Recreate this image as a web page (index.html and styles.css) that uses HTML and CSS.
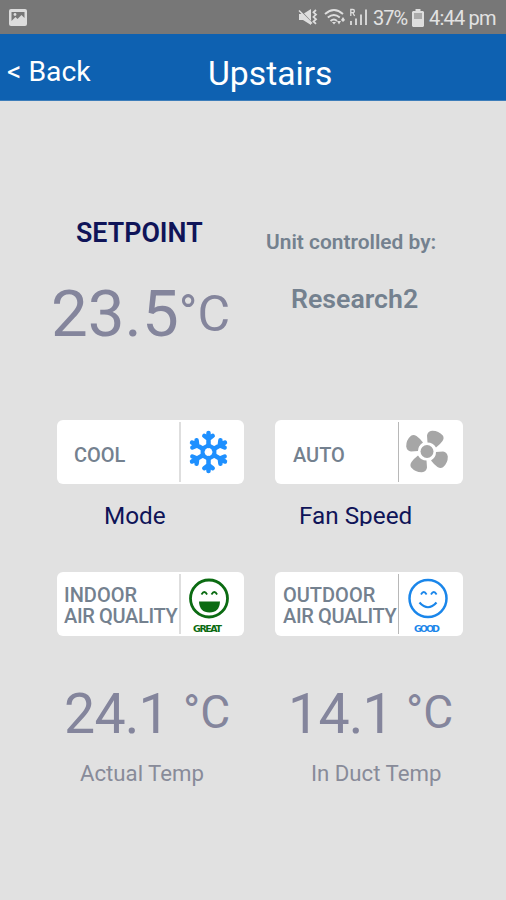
FILE: index.html
```
<!DOCTYPE html>
<html lang="en">
<head>
  <meta charset="UTF-8">
  <meta name="viewport" content="width=device-width, initial-scale=1.0">
  <title>Upstairs</title>
  <link rel="stylesheet" href="styles.css">
</head>
<body>
  <div class="status-bar">
    <svg class="gallery-icon" width="18" height="17" viewBox="0 0 18 17">
      <rect width="18" height="17" rx="2" fill="#dcdcdc"/>
      <path d="M2.500 3h13v6l-3-3-4 4-2-2-4 4z" fill="#777"/>
      <circle cx="6" cy="5.500" r="1.400" fill="#dcdcdc"/>
    </svg>
    <div class="status-right">
      <svg class="status-icons" width="71" height="20" viewBox="0 0 71 20">
        <!-- muted speaker -->
        <path d="M1 6h4l8-5v16l-8-5H1z" fill="#dedede"/>
        <path d="M2 2l12 13" stroke="#777" stroke-width="1.200"/>
        <path d="M1 2.500l13 13" stroke="#dedede" stroke-width="1.600"/>
        <path d="M18 2l-2.500 2.300 2.500 2.300-2.500 2.300 2.500 2.300-2.500 2.300 2.500 2.300" fill="none" stroke="#dedede" stroke-width="1.800"/>
        <!-- wifi -->
        <g fill="none" stroke="#dedede" stroke-width="1.900">
          <path d="M27 6q9-8 18 0"/>
          <path d="M29.800 9.500q6.200-5 12 0"/>
          <path d="M32.500 13q3.500-2.800 6.500 0"/>
        </g>
        <path d="M34 14h4l-2 2.500zM39 13h4l-2 3.500zM43 12l2-3 2 3-2 2z" fill="#dedede"/>
        <!-- signal -->
        <path d="M52.800 8V1.500h2q1.600 0 1.600 1.600t-1.600 1.600h-2m2 0L56.600 8" fill="none" stroke="#dedede" stroke-width="1.300"/>
        <path d="M53 13v4M58 10.500V17M63 6.500V17M68 1.500V17" stroke="#dedede" stroke-width="1.800"/>
      </svg>
      <span class="battery-text">37%</span>
      <svg class="battery-icon" width="12" height="18" viewBox="0 0 12 18">
        <path d="M3.500 0h5v2H11l1 1v14l-1 1H1l-1-1V3l1-1h2.500z" fill="#dedede"/>
        <rect x="2" y="4" width="8" height="6" fill="#aaa"/>
      </svg>
      <span class="clock">4:44 pm</span>
    </div>
  </div>

  <header class="header">
    <a class="back">&lt; Back</a>
    <h1 class="title">Upstairs</h1>
  </header>

  <main class="content">
    <section class="row top-row">
      <div class="col">
        <h2 class="setpoint-label">SETPOINT</h2>
        <div class="setpoint"><span class="value">23.5</span><span class="unit">°C</span></div>
      </div>
      <div class="col">
        <p class="controlled">Unit controlled by:</p>
        <p class="controller">Research2</p>
      </div>
    </section>

    <section class="row mode-row">
      <div class="col">
        <div class="card">
          <span class="card-label single">COOL</span>
          <svg class="card-icon" width="55" height="60" viewBox="-27.500 -30 55 60">
            <defs>
              <path id="arm" d="M0-6V-19M0-13l-4.200-3.200M0-13l4.200-3.200"/>
            </defs>
            <g fill="none" stroke="#1e90ff" stroke-width="4.500" stroke-linecap="round">
              <path d="M0-6.800l5.900 3.400v6.800L0 6.800l-5.900-3.400v-6.800z" stroke-width="4" stroke-linejoin="round"/>
              <use href="#arm"/>
              <use href="#arm" transform="rotate(60)"/>
              <use href="#arm" transform="rotate(120)"/>
              <use href="#arm" transform="rotate(180)"/>
              <use href="#arm" transform="rotate(240)"/>
              <use href="#arm" transform="rotate(300)"/>
            </g>
          </svg>
        </div>
        <p class="card-caption mode-caption">Mode</p>
      </div>
      <div class="col">
        <div class="card thin">
          <span class="card-label single">AUTO</span>
          <svg class="card-icon" width="55" height="60" viewBox="-28 -29.500 55 60">
            <defs>
              <path id="blade" d="M.5-9L0-16Q.5-20 5-20.800Q11.500-21 15.800-16Q17.500-13.500 15.500-10.500Q13-7 9-4Q6-9 .5-9z"/>
            </defs>
            <g fill="#a6a6a6">
              <circle r="6.500"/>
              <use href="#blade"/>
              <use href="#blade" transform="rotate(90)"/>
              <use href="#blade" transform="rotate(180)"/>
              <use href="#blade" transform="rotate(270)"/>
            </g>
          </svg>
        </div>
        <p class="card-caption fan-caption">Fan Speed</p>
      </div>
    </section>

    <section class="row quality-row">
      <div class="col">
        <div class="card">
          <div class="card-label">
            <p>INDOOR</p>
            <p class="tight">AIR QUALITY</p>
          </div>
          <svg class="card-icon" width="55" height="60" viewBox="0 0 55 60">
            <g fill="none" stroke="#0b6b12" stroke-width="2.800">
              <circle cx="28" cy="24.500" r="18.500"/>
              <path d="M20.500 20.500q2.800-5 5.600 0M30.500 20.500q2.800-5 5.600 0" stroke-width="1.800"/>
            </g>
            <path d="M18 27.500h21q-.5 11-10.500 11T18 27.500z" fill="#0b6b12"/>
            <text class="rating" x="26.500" y="58" textLength="29" fill="#0b6b12">GREAT</text>
          </svg>
        </div>
      </div>
      <div class="col">
        <div class="card thin">
          <div class="card-label">
            <p>OUTDOOR</p>
            <p class="tight">AIR QUALITY</p>
          </div>
          <svg class="card-icon" width="55" height="60" viewBox="0 0 55 60">
            <g fill="none" stroke="#1a86ea" stroke-width="2.500">
              <circle cx="29" cy="24.500" r="18.500"/>
              <path d="M22 20.500q2.800-5 5.600 0M32 20.500q2.800-5 5.600 0" stroke-width="1.800"/>
              <path d="M20.500 28.500q8.500 9.500 17 0" stroke-width="2.200"/>
            </g>
            <text class="rating" x="28" y="58" textLength="26" fill="#1a86ea">GOOD</text>
          </svg>
        </div>
      </div>
    </section>

    <section class="row temp-row">
      <div class="col">
        <div class="temp actual"><span class="value">24.1</span><span class="unit">°C</span></div>
        <p class="temp-caption actual-caption">Actual Temp</p>
      </div>
      <div class="col">
        <div class="temp duct"><span class="value">14.1</span><span class="unit">°C</span></div>
        <p class="temp-caption duct-caption">In Duct Temp</p>
      </div>
    </section>
  </main>
</body>
</html>
```
FILE: styles.css
```
* {
  box-sizing: border-box;
  margin: 0;
  padding: 0;
}

body {
  width: 506px;
  height: 900px;
  overflow: hidden;
  background-color: #e1e1e1;
  font-family: Roboto, "Liberation Sans", sans-serif;
  white-space: nowrap;
}

.status-bar {
  height: 34px;
  padding: 0 10px 0 9px;
  display: flex;
  justify-content: space-between;
  align-items: center;
  background-color: #777;
  color: #e2e2e2;
}

.status-right {
  display: flex;
  align-items: center;
  height: 34px;
  padding-top: 2px;
}

.status-icons {
  margin-right: 4px;
}

.battery-text,
.clock {
  font-size: 20px;
  line-height: 34px;
}

.battery-text {
  width: 34px;
  margin-right: 5px;
  letter-spacing: -1px;
}

.battery-icon {
  margin-right: 5px;
}

.clock {
  width: 67px;
  letter-spacing: -0.8px;
}

.header {
  height: 67px;
  display: grid;
  grid-template-columns: 208px 1fr;
  align-items: center;
  background-color: #0e61b1;
  border-bottom: 1px solid #3c7dba;
  color: #fff;
}

.back {
  padding: 8px 0 0 7px;
  font-size: 28.3px;
}

.title {
  padding-top: 12px;
  font-size: 33.7px;
  font-weight: 400;
}

.content {
  padding: 116px 43px 0 57px;
}

.row {
  display: grid;
  grid-template-columns: 187px 188px;
  column-gap: 31px;
}

.col {
  min-width: 0;
}

.top-row {
  height: 203px;
  grid-template-columns: 218px 188px;
  column-gap: 0;
}

.setpoint-label {
  padding: 1px 0 0 19px;
  font-size: 26.8px;
  line-height: 30px;
  font-weight: 600;
  color: #0f1458;
}

.setpoint,
.temp {
  display: flex;
  align-items: center;
  color: #84859c;
}

.setpoint {
  height: 70px;
  margin: 31px 0 0 -8px;
}

.setpoint .value {
  padding-left: 2px;
  font-size: 65.5px;
  line-height: 70px;
}

.setpoint .unit {
  font-size: 50px;
  line-height: 70px;
}

.controlled,
.controller {
  color: #74818f;
  font-weight: 600;
}

.controlled {
  margin: 10px 0 0 -9px;
  font-size: 20.9px;
  line-height: 30px;
}

.controller {
  margin: 27px 0 0 16px;
  font-size: 26.7px;
  line-height: 30px;
}

.mode-row {
  height: 152px;
}

.card {
  height: 64px;
  display: flex;
  align-items: center;
  background-color: #fff;
  border-radius: 6px;
}

.card-label {
  width: 122px;
  padding: 3px 0 0 7px;
  font-size: 20px;
  line-height: 21px;
  font-weight: 500;
  color: #74818f;
}

.card.thin .card-label {
  width: 123px;
  padding-left: 8px;
}

.card-label .tight {
  letter-spacing: -0.35px;
}

.card-label.single,
.card.thin .card-label.single {
  padding: 6px 0 0 17px;
}

.card.thin .card-label.single {
  padding-left: 18px;
}

.card-icon {
  height: 60px;
  border-left: 2px solid #dedede;
  box-sizing: content-box;
}

.card.thin .card-icon {
  border-left: 1px solid #b8b8b8;
}

.card-caption {
  height: 42px;
  padding-top: 17px;
  font-size: 24.3px;
  line-height: 30px;
  color: #0f1458;
  overflow: hidden;
}

.mode-caption {
  padding-left: 47px;
}

.fan-caption {
  padding-left: 24px;
}

.rating {
  font-family: "DejaVu Sans", sans-serif;
  font-size: 9.5px;
  font-weight: 700;
  text-anchor: middle;
}

.quality-row {
  height: 106px;
}

.temp {
  height: 70px;
}

.temp .value {
  width: 103px;
  padding-top: 3px;
  font-size: 55.5px;
  line-height: 70px;
  letter-spacing: -0.8px;
}

.temp .unit {
  font-size: 46px;
  line-height: 66px;
  margin: -2px 0 0 16px;
}

.actual {
  margin-left: 7px;
}

.duct {
  margin-left: 13px;
}

.duct .unit {
  margin-left: 15px;
}

.temp-caption {
  margin-top: 11px;
  font-size: 22.2px;
  line-height: 28px;
  color: #888b99;
}

.actual-caption {
  padding-left: 23px;
}

.duct-caption {
  padding-left: 36px;
}
```
